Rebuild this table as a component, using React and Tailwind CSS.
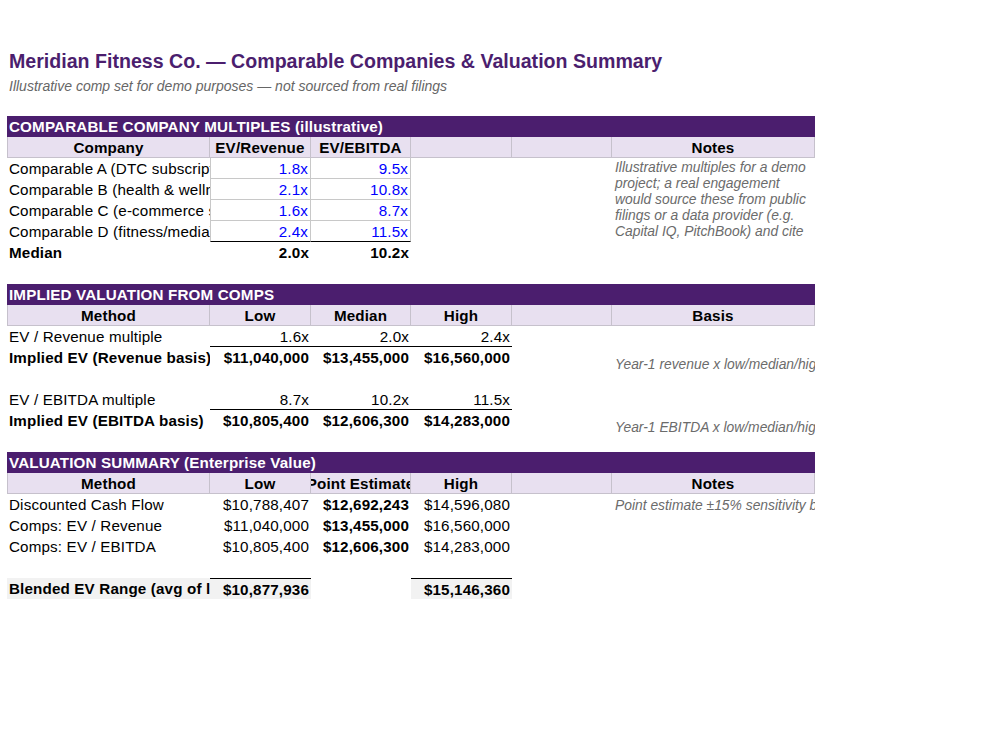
import React from 'react';
import clsx from 'clsx';

const GRID = 'grid grid-cols-[203px_101px_100px_101px_100px_203px]';

const Cell = ({ children, className }) => (
  <div className={clsx('h-[21px] flex items-center overflow-hidden whitespace-nowrap px-[2px] pt-[2px]', className)}>
    {children}
  </div>
);

const Num = ({ children, className }) => (
  <Cell className={clsx('justify-end', className)}>{children}</Cell>
);

const SectionBar = ({ title }) => (
  <div className="h-[21px] bg-[#4b1e6e] text-white font-bold flex items-center px-[2px] pt-[2px] whitespace-nowrap overflow-hidden">
    {title}
  </div>
);

const HeaderRow = ({ labels }) => (
  <div className={GRID}>
    {labels.map((l, i) => (
      <Cell
        key={i}
        className={clsx(
          'justify-center font-bold bg-[#e8e0f0] border-r border-b border-[#c6c1cc]',
          i === 0 && 'border-l'
        )}
      >
        {l}
      </Cell>
    ))}
  </div>
);

const Blank = () => <div className="h-[21px]" />;

const comps = [
  ['Comparable A (DTC subscription)', '1.8x', '9.5x'],
  ['Comparable B (health & wellness)', '2.1x', '10.8x'],
  ['Comparable C (e-commerce subscription)', '1.6x', '8.7x'],
  ['Comparable D (fitness/media)', '2.4x', '11.5x'],
];

const noteLines = [
  'Illustrative multiples for a demo',
  'project; a real engagement',
  'would source these from public',
  'filings or a data provider (e.g.',
  'Capital IQ, PitchBook) and cite',
  'sources.',
];

const Note = ({ children }) => (
  <div className="h-[21px] overflow-x-clip whitespace-nowrap px-[3px] pt-[9px] leading-[16px] text-[13.85px] tracking-normal font-normal italic text-[#6b6b6b]">
    {children}
  </div>
);

export default function App() {
  return (
    <div className="min-h-[750px] w-[1000px] bg-white text-black font-['Liberation_Sans',Arial,sans-serif] text-[15.2px] tracking-[0.15px] pl-[7px] pt-[50px]">
      <div className="w-[808px]">
        <h1 className="text-[19.6px] leading-[23px] tracking-normal font-bold text-[#4b1e6e] pl-[2px] whitespace-nowrap">
          Meridian Fitness Co. — Comparable Companies &amp; Valuation Summary
        </h1>
        <p className="mt-[5px] text-[14px] leading-[16px] tracking-normal italic text-[#666] pl-[2px]">
          Illustrative comp set for demo purposes — not sourced from real filings
        </p>

        {/* comparable multiples */}
        <div className="mt-[22px]">
          <SectionBar title="COMPARABLE COMPANY MULTIPLES (illustrative)" />
          <HeaderRow labels={['Company', 'EV/Revenue', 'EV/EBITDA', '', '', 'Notes']} />
          <div className={GRID}>
            <div className="col-span-5">
              {comps.map((c, i) => (
                <div key={i} className="grid grid-cols-[203px_101px_100px_101px_100px]">
                  <Cell>{c[0]}</Cell>
                  <Num
                    className={clsx(
                      'text-[#0000ff] border-l border-r border-b',
                      i === 3 ? 'border-b-black border-l-[#c8c8c8] border-r-[#c8c8c8]' : 'border-[#c8c8c8]'
                    )}
                  >
                    {c[1]}
                  </Num>
                  <Num
                    className={clsx(
                      'text-[#0000ff] border-r border-b',
                      i === 3 ? 'border-b-black border-r-[#c8c8c8]' : 'border-[#c8c8c8]'
                    )}
                  >
                    {c[2]}
                  </Num>
                  <Cell />
                  <Cell />
                </div>
              ))}
              <div className="grid grid-cols-[203px_101px_100px_101px_100px] font-bold">
                <Cell>Median</Cell>
                <Num>2.0x</Num>
                <Num>10.2x</Num>
                <Cell />
                <Cell />
              </div>
            </div>
            <div className="h-[86px] overflow-hidden px-[3px] pt-[1px] text-[13.85px] leading-[16px] tracking-normal italic text-[#6b6b6b] whitespace-nowrap">
              {noteLines.map((l) => (
                <div key={l}>{l}</div>
              ))}
            </div>
          </div>
        </div>

        <Blank />

        {/* implied valuation */}
        <SectionBar title="IMPLIED VALUATION FROM COMPS" />
        <HeaderRow labels={['Method', 'Low', 'Median', 'High', '', 'Basis']} />
        <div className={GRID}>
          <Cell>EV / Revenue multiple</Cell>
          <Num className="border-b border-black">1.6x</Num>
          <Num className="border-b border-black">2.0x</Num>
          <Num className="border-b border-black">2.4x</Num>
          <Cell />
          <Cell />
        </div>
        <div className={GRID}>
          <Cell className="font-bold">Implied EV (Revenue basis)</Cell>
          <Num className="font-bold">$11,040,000</Num>
          <Num className="font-bold">$13,455,000</Num>
          <Num className="font-bold">$16,560,000</Num>
          <Cell />
          <Note>Year-1 revenue x low/median/high multiple</Note>
        </div>
        <Blank />
        <div className={GRID}>
          <Cell>EV / EBITDA multiple</Cell>
          <Num className="border-b border-black">8.7x</Num>
          <Num className="border-b border-black">10.2x</Num>
          <Num className="border-b border-black">11.5x</Num>
          <Cell />
          <Cell />
        </div>
        <div className={GRID}>
          <Cell className="font-bold">Implied EV (EBITDA basis)</Cell>
          <Num className="font-bold">$10,805,400</Num>
          <Num className="font-bold">$12,606,300</Num>
          <Num className="font-bold">$14,283,000</Num>
          <Cell />
          <Note>Year-1 EBITDA x low/median/high multiple</Note>
        </div>

        <Blank />

        {/* valuation summary */}
        <SectionBar title="VALUATION SUMMARY (Enterprise Value)" />
        <HeaderRow labels={['Method', 'Low', 'Point Estimate', 'High', '', 'Notes']} />
        <div className={GRID}>
          <Cell>Discounted Cash Flow</Cell>
          <Num>$10,788,407</Num>
          <Num className="font-bold">$12,692,243</Num>
          <Num>$14,596,080</Num>
          <Cell />
          <Cell className="px-[3px] text-[13.85px] tracking-normal italic text-[#6b6b6b]">
            Point estimate ±15% sensitivity band
          </Cell>
        </div>
        <div className={GRID}>
          <Cell>Comps: EV / Revenue</Cell>
          <Num>$11,040,000</Num>
          <Num className="font-bold">$13,455,000</Num>
          <Num>$16,560,000</Num>
          <Cell />
          <Cell />
        </div>
        <div className={GRID}>
          <Cell>Comps: EV / EBITDA</Cell>
          <Num>$10,805,400</Num>
          <Num className="font-bold">$12,606,300</Num>
          <Num>$14,283,000</Num>
          <Cell />
          <Cell />
        </div>
        <Blank />
        <div className={clsx(GRID, 'font-bold')}>
          <Cell className="bg-[#f2f2f2]">Blended EV Range (avg of low/high)</Cell>
          <Num className="bg-[#f2f2f2] border-t border-black">$10,877,936</Num>
          <Cell />
          <Num className="bg-[#f2f2f2] border-t border-black">$15,146,360</Num>
          <Cell />
          <Cell />
        </div>
      </div>
    </div>
  );
}
